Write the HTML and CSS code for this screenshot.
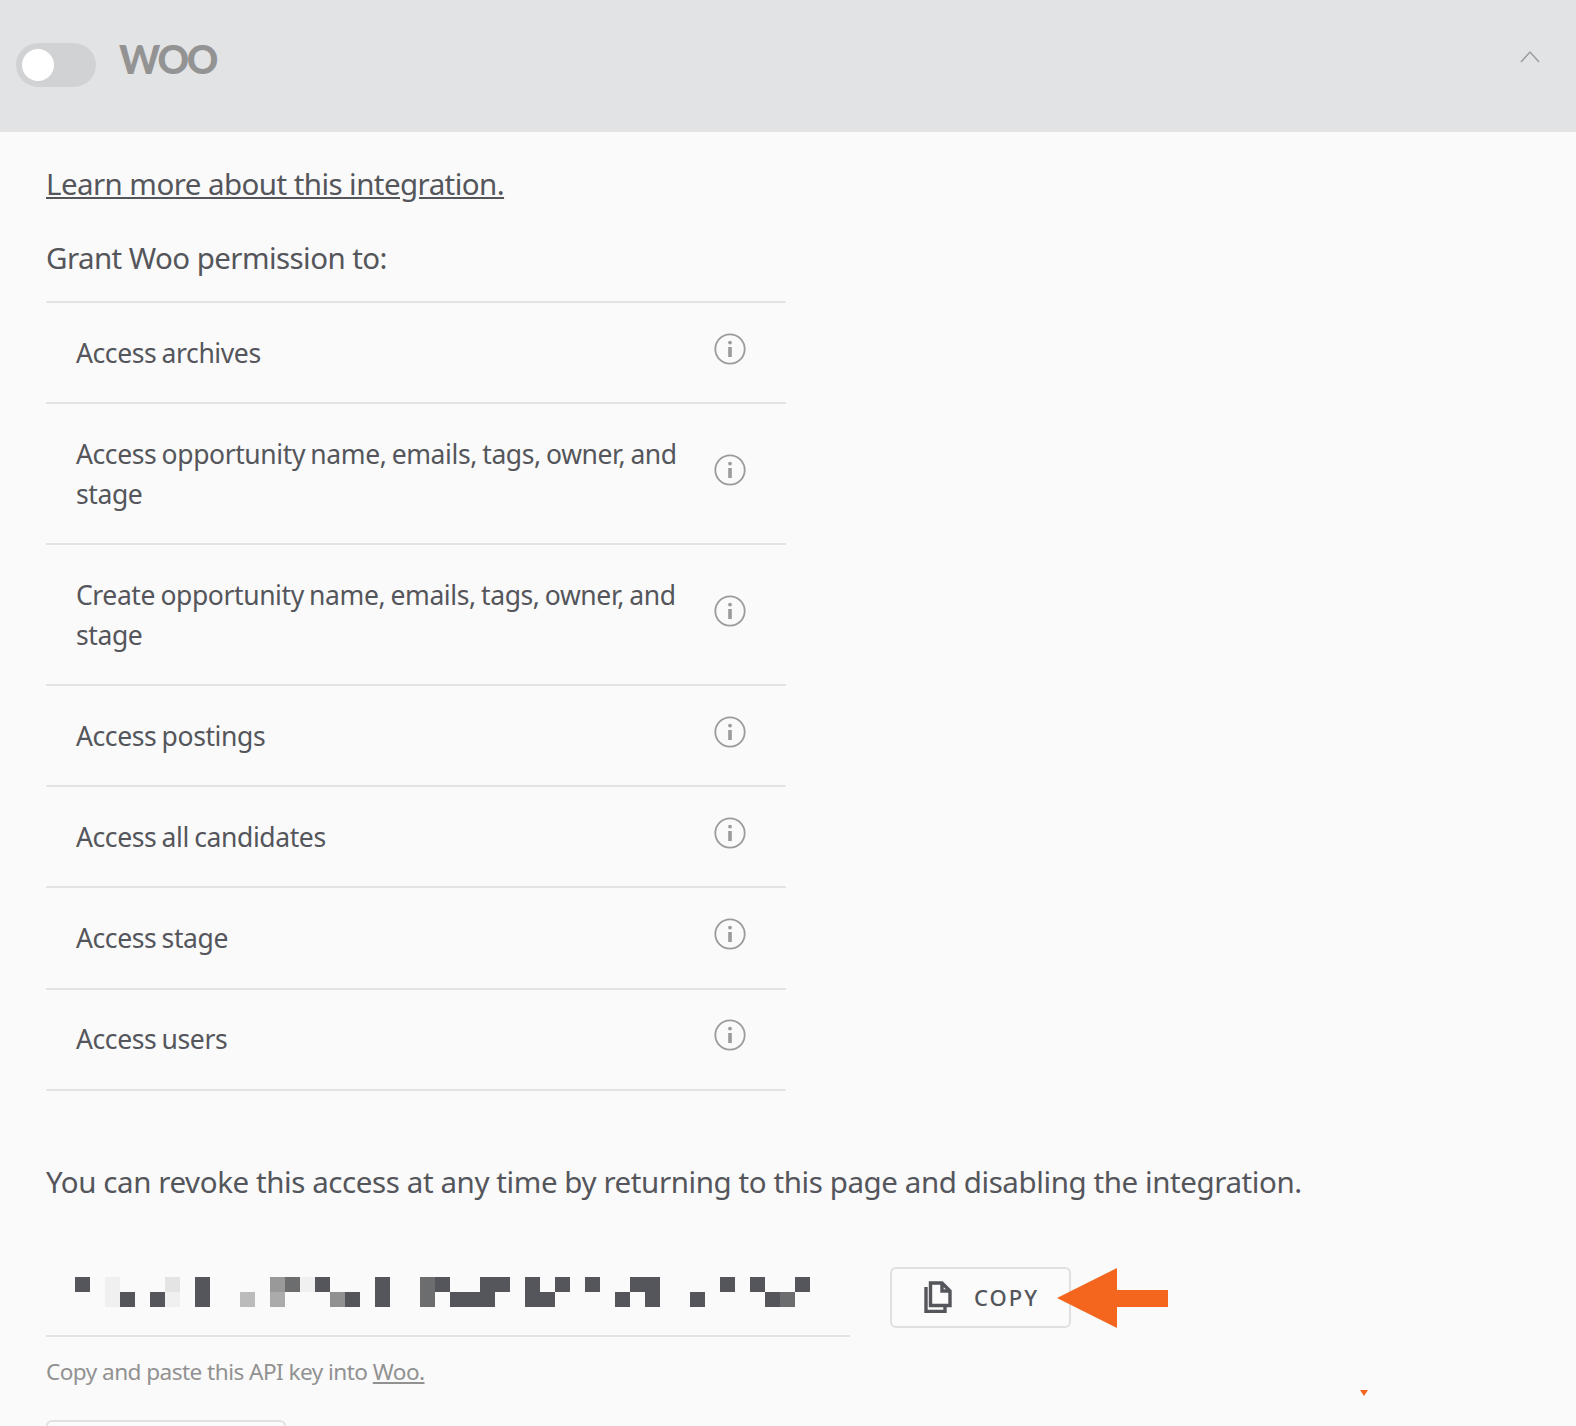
FILE: index.html
```html
<!DOCTYPE html>
<html lang="en">
<head>
<meta charset="utf-8">
<title>Woo integration</title>
<link rel="stylesheet" href="styles.css">
</head>
<body>
<header class="bar">
  <div class="bar-left">
    <span class="toggle"><span class="knob"></span></span>
    <span class="logo">WOO</span>
  </div>
  <svg class="chevron" width="20" height="13" viewBox="0 0 20 13"><path d="M1 12 L10 2 L19 12" fill="none" stroke="#9a9b9d" stroke-width="1.5"/></svg>
</header>
<main class="content">
  <a class="learn" href="#">Learn more about this integration.</a>
  <p class="grant">Grant Woo permission to:</p>
  <ul class="perms">
    <li class="perm"><span class="perm-text">Access archives</span><svg class="info" viewBox="0 0 32 32"><circle cx="16" cy="16" r="14.7"/><rect x="14.2" y="14" width="3.6" height="10"/><circle class="dot" cx="16" cy="9.6" r="1.9"/></svg></li>
    <li class="perm"><span class="perm-text">Access opportunity name, emails, tags, owner, and stage</span><svg class="info" viewBox="0 0 32 32"><circle cx="16" cy="16" r="14.7"/><rect x="14.2" y="14" width="3.6" height="10"/><circle class="dot" cx="16" cy="9.6" r="1.9"/></svg></li>
    <li class="perm"><span class="perm-text">Create opportunity name, emails, tags, owner, and stage</span><svg class="info" viewBox="0 0 32 32"><circle cx="16" cy="16" r="14.7"/><rect x="14.2" y="14" width="3.6" height="10"/><circle class="dot" cx="16" cy="9.6" r="1.9"/></svg></li>
    <li class="perm"><span class="perm-text">Access postings</span><svg class="info" viewBox="0 0 32 32"><circle cx="16" cy="16" r="14.7"/><rect x="14.2" y="14" width="3.6" height="10"/><circle class="dot" cx="16" cy="9.6" r="1.9"/></svg></li>
    <li class="perm"><span class="perm-text">Access all candidates</span><svg class="info" viewBox="0 0 32 32"><circle cx="16" cy="16" r="14.7"/><rect x="14.2" y="14" width="3.6" height="10"/><circle class="dot" cx="16" cy="9.6" r="1.9"/></svg></li>
    <li class="perm"><span class="perm-text">Access stage</span><svg class="info" viewBox="0 0 32 32"><circle cx="16" cy="16" r="14.7"/><rect x="14.2" y="14" width="3.6" height="10"/><circle class="dot" cx="16" cy="9.6" r="1.9"/></svg></li>
    <li class="perm"><span class="perm-text">Access users</span><svg class="info" viewBox="0 0 32 32"><circle cx="16" cy="16" r="14.7"/><rect x="14.2" y="14" width="3.6" height="10"/><circle class="dot" cx="16" cy="9.6" r="1.9"/></svg></li>
  </ul>
  <p class="revoke">You can revoke this access at any time by returning to this page and disabling the integration.</p>
  <div class="key-row">
    <div class="key-field">
      <svg class="key-blur" width="735" height="30" viewBox="0 0 49 2" shape-rendering="crispEdges">
        <g fill="#54565b">
          <rect x="0" y="0" width="1" height="1"/><rect x="8" y="0" width="1" height="2"/><rect x="16" y="0" width="1" height="1"/><rect x="20" y="0" width="1" height="2"/><rect x="24" y="0" width="1" height="1"/><rect x="27" y="0" width="2" height="1"/><rect x="30" y="0" width="1" height="2"/><rect x="32" y="0" width="1" height="1"/><rect x="34" y="0" width="1" height="1"/><rect x="37" y="0" width="2" height="1"/><rect x="38" y="1" width="1" height="1"/><rect x="43" y="0" width="1" height="1"/><rect x="45" y="0" width="1" height="1"/><rect x="48" y="0" width="1" height="1"/>
          <rect x="3" y="1" width="1" height="1"/><rect x="5" y="1" width="1" height="1"/><rect x="18" y="1" width="1" height="1"/><rect x="25" y="1" width="3" height="1"/><rect x="31" y="1" width="1" height="1"/><rect x="36" y="1" width="1" height="1"/><rect x="41" y="1" width="1" height="1"/><rect x="46" y="1" width="1" height="1"/>
        </g>
        <g fill="#f0f0f0"><rect x="2" y="0" width="1" height="2"/><rect x="6" y="1" width="1" height="1"/><rect x="15" y="0" width="1" height="1"/></g>
        <rect x="6" y="0" width="1" height="1" fill="#e4e4e4"/>
        <rect x="11" y="1" width="1" height="1" fill="#bbbbbb"/>
        <rect x="13" y="0" width="1" height="1" fill="#999999"/>
        <rect x="13" y="1" width="1" height="1" fill="#ababab"/>
        <rect x="17" y="1" width="1" height="1" fill="#919191"/>
        <g fill="#6c6d6f"><rect x="14" y="0" width="1" height="1"/><rect x="23" y="0" width="1" height="2"/><rect x="47" y="1" width="1" height="1"/></g>
      </svg>
    </div>
    <button class="copy" type="button">
      <svg class="copy-icon" width="28" height="32" viewBox="0 0 28 32"><path d="M6.5 24.5 V2 H18 L26 10 V24.5 Z M18 2 V10 H26 M2 6 V30.5 H21 V25" fill="none" stroke="#54565b" stroke-width="3.4"/></svg>
      <span>COPY</span>
    </button>
    <svg class="arrow" width="112" height="60" viewBox="0 0 112 60"><polygon points="0,30 60,0 60,22 111,22 111,39 60,39 60,60" fill="#f4661e"/></svg>
  </div>
  <p class="help">Copy and paste this API key into <a href="#">Woo.</a></p>
  <svg class="mark" width="8" height="6" viewBox="0 0 8 6"><polygon points="0,0 8,0 4,6" fill="#f4661e"/></svg>
  <div class="stub"></div>
</main>
</body>
</html>
```
FILE: styles.css
```css
* { box-sizing: border-box; }
html, body { margin: 0; height: 1426px; overflow: hidden; }
body {
  background: #fafafa;
  color: #54565b;
  font-family: "Noto Sans", "Open Sans", sans-serif;
}
.bar {
  height: 132px;
  background: #e2e3e5;
  display: flex;
  align-items: flex-start;
  justify-content: space-between;
  padding: 0 36px 0 16px;
}
.bar-left { display: flex; align-items: flex-start; }
.toggle {
  width: 80px;
  height: 44px;
  margin-top: 43px;
  border-radius: 22px;
  background: #d1d2d4;
  padding: 6px;
  display: block;
}
.knob { display: block; width: 32px; height: 32px; border-radius: 50%; background: #fff; }
.logo {
  margin: 34px 0 0 23px;
  font-family: "Lato", sans-serif;
  font-weight: 900;
  font-size: 39px;
  line-height: 50px;
  letter-spacing: -2.2px;
  color: #939393;
}
.chevron { margin-top: 50px; }
.content { position: relative; padding: 0 46px; }
.learn {
  display: block;
  width: max-content;
  margin-top: 30px;
  font-size: 29.5px;
  line-height: 44px;
  color: #54565b;
  letter-spacing: -0.56px;
}
.grant { margin: 30px 0 0; font-size: 29.5px; line-height: 44px; letter-spacing: -0.57px; }
.perms {
  list-style: none;
  margin: 21px 0 0;
  padding: 0;
  width: 740px;
  border-top: 2px solid #e3e3e3;
}
.perm {
  display: flex;
  align-items: center;
  justify-content: space-between;
  padding: 29.6px 40px 29.5px 30px;
  border-bottom: 2px solid #e3e3e3;
}
.perm-text { width: 610px; font-size: 26.5px; line-height: 40px; letter-spacing: -0.4px; word-spacing: -1.2px; }
.info { width: 32px; height: 32px; margin-bottom: 8px; flex: none; }
.info circle { fill: none; stroke: #9a9b9d; stroke-width: 1.8; }
.info rect, .info .dot { fill: #9a9b9d; stroke: none; }
.revoke { margin: 68px 0 0; font-size: 29.5px; line-height: 46px; letter-spacing: -0.41px; white-space: nowrap; }
.key-row { position: relative; display: flex; align-items: flex-start; margin-top: 58px; }
.key-field { width: 804px; height: 74px; padding: 14px 0 0 29px; border-bottom: 2px solid #e3e3e3; }
.key-blur { display: block; }
.copy {
  width: 181px;
  height: 61px;
  margin: 4px 0 0 40px;
  background: #fbfbfb;
  border: 2px solid #e0e0e0;
  border-radius: 6px;
  display: flex;
  align-items: center;
  padding: 0 0 0 32px;
  color: #54565b;
  font-family: inherit;
  font-size: 22px;
  font-weight: 500;
  letter-spacing: 2px;
}
.copy-icon { margin-right: 22px; }
.arrow { position: absolute; left: 1011px; top: 5px; }
.help { margin: 15px 0 0; font-size: 22.6px; line-height: 40px; color: #919191; letter-spacing: -0.55px; }
.help a { color: inherit; }
.mark { position: absolute; left: 1360px; top: 1228px; }
.stub {
  width: 240px;
  height: 40px;
  margin-top: 28px;
  border: 2px solid #e0e0e0;
  border-radius: 6px;
  background: #fbfbfb;
}
```
